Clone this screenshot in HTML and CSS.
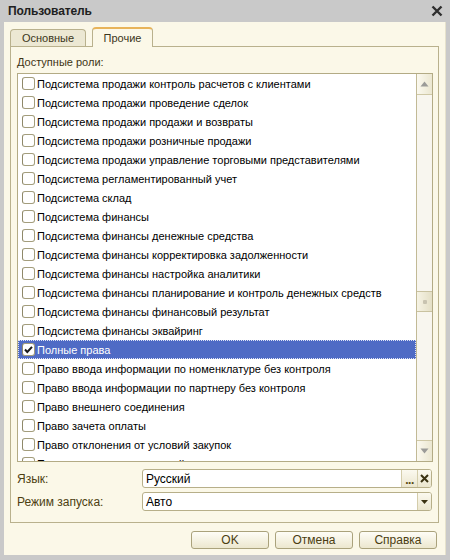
FILE: index.html
```html
<!DOCTYPE html>
<html lang="ru">
<head>
<meta charset="utf-8">
<title>Пользователь</title>
<link rel="stylesheet" href="styles.css">
</head>
<body>
<div class="window">
  <div class="titlebar">
    <span class="title">Пользователь</span>
    <svg class="close" width="12" height="12" viewBox="0 0 12 12"><path d="M1.5 1.5 L10.5 10.5 M10.5 1.5 L1.5 10.5" stroke="#2e2e2e" stroke-width="2.4" fill="none"/></svg>
  </div>
  <div class="client">
    <div class="tabs">
      <div class="tab">Основные</div>
      <div class="tab active">Прочие</div>
    </div>
    <div class="panel">
      <div class="caption">Доступные роли:</div>
      <div class="list">
        <div class="rows">
          <div class="row"><span class="cb"></span>Подсистема продажи контроль расчетов с клиентами</div>
          <div class="row"><span class="cb"></span>Подсистема продажи проведение сделок</div>
          <div class="row"><span class="cb"></span>Подсистема продажи продажи и возвраты</div>
          <div class="row"><span class="cb"></span>Подсистема продажи розничные продажи</div>
          <div class="row"><span class="cb"></span>Подсистема продажи управление торговыми представителями</div>
          <div class="row"><span class="cb"></span>Подсистема регламентированный учет</div>
          <div class="row"><span class="cb"></span>Подсистема склад</div>
          <div class="row"><span class="cb"></span>Подсистема финансы</div>
          <div class="row"><span class="cb"></span>Подсистема финансы денежные средства</div>
          <div class="row"><span class="cb"></span>Подсистема финансы корректировка задолженности</div>
          <div class="row"><span class="cb"></span>Подсистема финансы настройка аналитики</div>
          <div class="row"><span class="cb"></span>Подсистема финансы планирование и контроль денежных средств</div>
          <div class="row"><span class="cb"></span>Подсистема финансы финансовый результат</div>
          <div class="row"><span class="cb"></span>Подсистема финансы эквайринг</div>
          <div class="row selected"><span class="cb checked"><svg width="11" height="11" viewBox="0 0 11 11"><path d="M2 5.5 L4.3 8 L9 2.8" stroke="#1a1a1a" stroke-width="2" fill="none"/></svg></span>Полные права</div>
          <div class="row"><span class="cb"></span>Право ввода информации по номенклатуре без контроля</div>
          <div class="row"><span class="cb"></span>Право ввода информации по партнеру без контроля</div>
          <div class="row"><span class="cb"></span>Право внешнего соединения</div>
          <div class="row"><span class="cb"></span>Право зачета оплаты</div>
          <div class="row"><span class="cb"></span>Право отклонения от условий закупок</div>
          <div class="row"><span class="cb"></span>Право перерасчета торговой наценки</div>
        </div>
        <div class="scrollbar">
          <div class="sbtn"><svg width="9" height="6" viewBox="0 0 9 6"><path d="M4.5 0.5 L8.5 5.5 L0.5 5.5 Z" fill="#9b9b98"/></svg></div>
          <div class="track"><div class="thumb"><span class="grip"></span></div></div>
          <div class="sbtn"><svg width="9" height="6" viewBox="0 0 9 6"><path d="M0.5 0.5 L8.5 0.5 L4.5 5.5 Z" fill="#9b9b98"/></svg></div>
        </div>
      </div>
      <div class="field-row">
        <span class="flabel">Язык:</span>
        <div class="field">
          <span class="fvalue">Русский</span>
          <span class="fbtn dots">...</span>
          <span class="fbtn"><svg width="9" height="9" viewBox="0 0 9 9"><path d="M1 1 L8 8 M8 1 L1 8" stroke="#3a3212" stroke-width="2" fill="none"/></svg></span>
        </div>
      </div>
      <div class="field-row">
        <span class="flabel">Режим запуска:</span>
        <div class="field">
          <span class="fvalue">Авто</span>
          <span class="fbtn"><svg width="7" height="4" viewBox="0 0 7 4"><path d="M0 0 L7 0 L3.5 4 Z" fill="#3a3212"/></svg></span>
        </div>
      </div>
    </div>
    <div class="buttons">
      <div class="button">OK</div>
      <div class="button">Отмена</div>
      <div class="button">Справка</div>
    </div>
  </div>
</div>
</body>
</html>
```
FILE: styles.css
```css
* { box-sizing: border-box; }
html, body { margin: 0; padding: 0; }
body {
  width: 450px;
  height: 560px;
  background: #c9c9c9;
  font-family: "Liberation Sans", Arial, sans-serif;
  font-size: 11px;
  overflow: hidden;
}
.window {
  width: 450px;
  height: 560px;
  display: flex;
  flex-direction: column;
}
.titlebar {
  height: 22px;
  display: flex;
  align-items: center;
  justify-content: space-between;
  padding: 0 8px 0 8px;
}
.title {
  font-weight: bold;
  font-size: 12px;
  color: #202020;
  letter-spacing: -0.1px;
}
.close { margin-right: -1px; }
.client {
  flex: 1;
  margin: 0 4px 5px 4px;
  background: #fbf8e8;
  padding: 5px 6px 0 6px;
  display: flex;
  flex-direction: column;
  border-right: 1px solid #e6e2cc;
}
.tabs {
  height: 19px;
  display: flex;
  align-items: flex-end;
  gap: 6px;
}
.tab {
  height: 17px;
  border: 1px solid #b9b18d;
  border-bottom: none;
  border-radius: 4px 4px 0 0;
  background: #ece8d3;
  color: #3b3620;
  font-size: 11px;
  display: flex;
  align-items: center;
  justify-content: center;
  width: 76px;
}
.tab.active {
  width: 61px;
  height: 20px;
  background: #fbf8e8;
  border-top: 2px solid #e8b45a;
  position: relative;
  z-index: 1;
  margin-bottom: -1px;
  padding-bottom: 1px;
}
.panel {
  height: 477px;
  border: 1px solid #b9b18d;
  padding: 8px 5px 0 6px;
  display: flex;
  flex-direction: column;
}
.caption {
  height: 14px;
  line-height: 14px;
  color: #3e3414;
  font-size: 11px;
  margin-bottom: 4px;
}
.list {
  height: 389px;
  border: 1px solid #b3ab85;
  background: #fff;
  display: flex;
  margin-bottom: 7px;
}
.rows {
  flex: 1;
  overflow: hidden;
}
.row {
  height: 19px;
  display: flex;
  align-items: center;
  padding-left: 4px;
  font-size: 11px;
  color: #000;
  white-space: nowrap;
}
.row.selected {
  background: #4f6bc5;
  color: #fff;
  outline: 1px dotted #dfe4f6;
  outline-offset: -1px;
}
.cb {
  width: 13px;
  height: 13px;
  border: 1px solid #a39d7c;
  border-left-color: #8f896a;
  border-radius: 3px;
  background: #fff;
  margin-right: 2px;
  flex: none;
  display: flex;
  align-items: center;
  justify-content: center;
}
.scrollbar {
  width: 16px;
  flex: none;
  border-left: 1px solid #c2ba96;
  background: #f8f6ef;
  display: flex;
  flex-direction: column;
}
.sbtn {
  height: 21px;
  flex: none;
  background: linear-gradient(to right, #fbf9ef, #ebe7d1);
  border-bottom: 1px solid #cfc8a6;
  display: flex;
  align-items: center;
  justify-content: center;
}
.sbtn:last-child {
  border-bottom: none;
  border-top: 1px solid #cfc8a6;
}
.track {
  flex: 1;
  display: flex;
  flex-direction: column;
}
.thumb {
  margin-top: 196px;
  height: 21px;
  background: linear-gradient(to right, #f6f3e4, #e4dfc6);
  border-top: 1px solid #c9c2a0;
  border-bottom: 1px solid #c9c2a0;
  display: flex;
  align-items: center;
  justify-content: center;
}
.grip {
  width: 4px;
  height: 4px;
  border-radius: 1px;
  background: #c8c3b0;
}
.field-row {
  height: 19px;
  display: flex;
  align-items: center;
  margin-bottom: 4px;
  padding-right: 1px;
}
.flabel {
  width: 125px;
  color: #4d3f12;
  font-size: 12px;
  flex: none;
}
.field {
  flex: 1;
  height: 19px;
  border: 1px solid #b7af89;
  border-radius: 3px;
  background: #fff;
  display: flex;
  align-items: stretch;
  overflow: hidden;
}
.fvalue {
  flex: 1;
  padding-left: 3px;
  font-size: 12px;
  color: #000;
  display: flex;
  align-items: center;
}
.fbtn {
  width: 14px;
  flex: none;
  background: linear-gradient(to bottom, #fbf9ef, #ebe6cf);
  border-left: 1px solid #d4cdab;
  display: flex;
  align-items: center;
  justify-content: center;
}
.fbtn.dots {
  width: 16px;
  color: #5a4a14;
  font-weight: bold;
  font-size: 12px;
  align-items: flex-end;
  line-height: 14px;
  letter-spacing: -0.5px;
}
.buttons {
  margin-top: 8px;
  height: 18px;
  display: flex;
  justify-content: flex-end;
  gap: 6px;
  padding-right: 2px;
}
.button {
  width: 78px;
  height: 18px;
  border: 1px solid #aaa27c;
  border-radius: 3px;
  background: linear-gradient(to bottom, #fefdf7, #ece7cf);
  color: #4b3d12;
  font-size: 12px;
  display: flex;
  align-items: center;
  justify-content: center;
}
```
